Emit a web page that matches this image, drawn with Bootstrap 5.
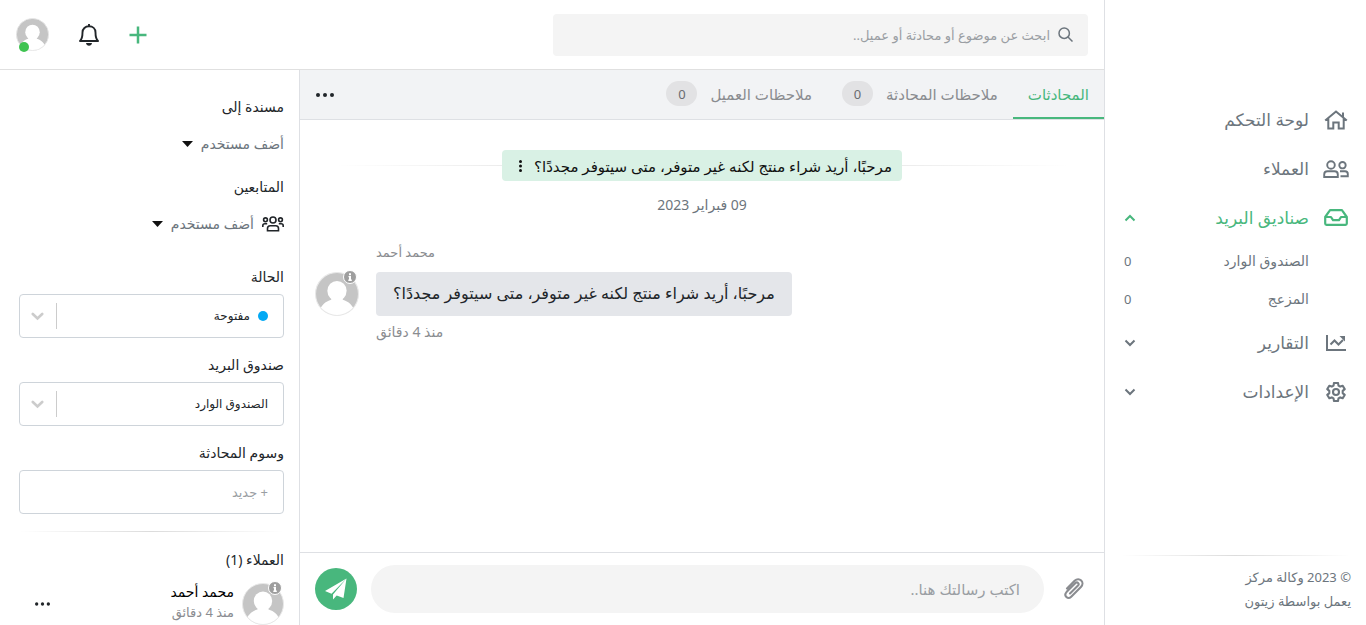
<!DOCTYPE html>
<html lang="ar" dir="rtl">
<head>
<meta charset="utf-8">
<meta name="viewport" content="width=device-width, initial-scale=1">
<title>زيتون</title>
<link rel="stylesheet" href="https://cdn.jsdelivr.net/npm/bootstrap@5.3.0/dist/css/bootstrap.min.css">
<style>
  :root { --brand: #48b77d; --line: #dee0e4; --ink: #212529; --soft: #6c757d; --pale: #8a8c90; }
  body { font-family: "Noto Sans", "DejaVu Sans", sans-serif; font-size: 14px; line-height: 24px; color: var(--ink); background: #fff; }
  svg { display: block; flex: none; }
  button { font-family: inherit; }
  a { color: inherit; text-decoration: none; }
  .plain-btn { border: 0; background: none; padding: 0; color: inherit; }
  .t12 { font-size: 12px; } .t13 { font-size: 13px; } .t14 { font-size: 14px; } .t15 { font-size: 15px; } .t16 { font-size: 16px; } .t17 { font-size: 17px; }
  .soft { color: var(--soft); } .pale { color: var(--pale); } .ink { color: var(--ink); } .brand { color: var(--brand); }

  .side-nav { width: 262px; border-left: 1px solid var(--line); padding-top: 95px; }
  .nav-row { height: 49px; padding: 0 17px 0 19px; gap: 14px; width: 100%; color: var(--soft); }
  .nav-row.current { color: var(--brand); }
  .nav-ico { width: 26px; display: flex; justify-content: center; flex: none; }
  .flip { transform: rotate(180deg); }
  .sub-row { height: 38px; padding: 0 57px 0 19px; color: var(--soft); }
  .fade-line { height: 1px; background: linear-gradient(to right, transparent, #dcdcdc, transparent); }
  .side-foot { padding: 9px 15px 12px; }

  .top-bar { height: 70px; border-bottom: 1px solid #e0e0e0; padding: 0 16px; }
  .search-box { width: 535px; height: 42px; background: #f4f4f4; border-radius: 4px; padding: 0 15px; gap: 8px; color: var(--soft); }
  .bare { border: 0; background: transparent; outline: 0; padding: 0; min-width: 0; color: var(--ink); }
  .bare::placeholder { color: #9a9ea3; opacity: 1; }
  .top-actions { gap: 30px; }
  .face { position: relative; flex: none; }
  .face .dot-on { position: absolute; left: 3px; bottom: -1px; width: 10px; height: 10px; border-radius: 50%; background: #3fc351; }
  .face .info-dot { position: absolute; right: 2px; top: -2px; }

  .tab-bar { height: 50px; background: #f2f3f5; border-bottom: 1px solid var(--line); }
  .tab-item { height: 49px; padding: 0 15px; gap: 13px; color: var(--pale); display: flex; align-items: center; border-bottom: 2px solid transparent; white-space: nowrap; }
  .tab-item.current { color: var(--brand); border-color: var(--brand); }
  .num-pill { width: 31px; height: 25px; border-radius: 13px; background: #e2e2e4; color: #6a6c70; display: flex; align-items: center; justify-content: center; }

  .talk { padding: 30px 35px 0 15px; min-height: 0; }
  .talk-head { margin-left: 20px; }
  .subject { background: #d9f1e5; border-radius: 4px; padding: 0 10px 0 13px; height: 31px; gap: 8px; color: #111; }
  .half-a { height: 1px; background: linear-gradient(to left, transparent, #ececec); }
  .half-b { height: 1px; background: linear-gradient(to right, transparent, #ececec); }
  .day { margin: 12px 0 23px; }
  .talk-row { gap: 17px; }
  .talk-row .face { margin-top: 4px; }
  .bubble { background: #e4e6ea; border-radius: 4px; padding: 9px 17px 11px; margin: 8px 0 4px; }
  .composer { border-top: 1px solid var(--line); padding: 12px 15px; gap: 14px; }
  .pill-input { height: 48px; border-radius: 24px; background: #f4f4f4; padding: 0 24px; }
  .send { width: 42px; height: 42px; border-radius: 50%; background: var(--brand); color: #fff; }

  .info-col { width: 300px; border-right: 1px solid var(--line); padding: 25px 15px 0 19px; }
  .people-pick { margin: 13px 0 19px; gap: 8px; }
  .field-block { margin-bottom: 15px; }
  .field-block label, .field-title { display: block; }
  .fields { margin-top: 29px; }
  .pick { height: 44px; border: 1px solid #ced4da; border-radius: 4px; padding: 0 15px 0 11px; margin-top: 5px; }
  .pick select { appearance: none; background: none; }
  .pick-dot { width: 10px; height: 10px; border-radius: 50%; background: #03a9f4; margin-left: 8px; }
  .pick-cut { width: 1px; height: 26px; background: #ccc; margin: 0 0 0 12px; }
  .list-line { margin-top: 17px; }
  .client-head { margin: 16px 0 10px; }
  .client-text { line-height: 20px; padding-bottom: 4px; }
</style>
<script src="https://cdn.jsdelivr.net/npm/bootstrap@5.3.0/dist/js/bootstrap.bundle.min.js"></script>
</head>
<body>
<svg width="0" height="0" class="position-absolute" aria-hidden="true">
  <symbol id="person" viewBox="0 0 42 42">
    <clipPath id="round"><circle cx="21" cy="21" r="20.500"/></clipPath>
    <circle cx="21" cy="21" r="20.500" fill="#c5c5c5"/>
    <g clip-path="url(#round)" fill="#fff"><ellipse cx="21" cy="18" rx="9.200" ry="9.500"/><path d="M15.500 24h11v2.500C32 28 36.500 32 38 38v6H4v-6c1.500-6 6-10 11.500-11.500z"/></g>
    <circle cx="21" cy="21" r="20.500" fill="none" stroke="#e8e8e8"/>
  </symbol>
  <symbol id="info" viewBox="0 0 14 14"><circle cx="7" cy="7" r="6.500" fill="#9e9e9e" stroke="#fff"/><path d="M6 3.200h2v2H6zM5.500 6H8v3.600h.8V11H5.300V9.600H6V7.300h-.5z" fill="#fff"/></symbol>
  <symbol id="down" viewBox="0 0 12 8"><path d="M1.500 1.500 6 6l4.500-4.500" fill="none" stroke="currentColor" stroke-width="2"/></symbol>
  <symbol id="caret" viewBox="0 0 11 6"><path d="M0 0h11L5.500 6z" fill="#111"/></symbol>
  <symbol id="pick-down" viewBox="0 0 13 9"><path d="m1.800 2 4.700 4.500L11.200 2" fill="none" stroke="#ccc" stroke-width="2.600" stroke-linecap="round"/></symbol>
  <symbol id="dots" viewBox="0 0 18 4"><g fill="currentColor"><circle cx="2" cy="2" r="2"/><circle cx="9" cy="2" r="2"/><circle cx="16" cy="2" r="2"/></g></symbol>
</svg>

<div class="d-flex vh-100 overflow-hidden">
  <aside class="side-nav d-flex flex-column flex-shrink-0">
    <nav class="t17">
      <a href="#" class="nav-row d-flex align-items-center">
        <span class="nav-ico"><svg width="24" height="20" viewBox="0 0 24 20" fill="none" stroke="currentColor" stroke-width="2"><path d="M1.200 10.500 12 1.500l10.800 9M19 7.200V2.500M4.300 8.500v10h5v-6h5.400v6h5v-10"/></svg></span>
        <span>لوحة التحكم</span></a>
      <a href="#" class="nav-row d-flex align-items-center">
        <span class="nav-ico"><svg width="26" height="18" viewBox="0 0 26 18" fill="none" stroke="currentColor" stroke-width="1.900"><circle cx="8" cy="5" r="3.800"/><circle cx="19.500" cy="5.200" r="3.200"/><path d="M1.200 17v-2.500c0-2 1.500-3.200 3.300-3.200h7c1.800 0 3.300 1.200 3.300 3.200V17zM17 11.300h5c1.700 0 2.800 1.200 2.800 2.700v2.200h-7.300"/></svg></span>
        <span>العملاء</span></a>
      <a href="#" class="nav-row current d-flex align-items-center">
        <span class="nav-ico"><svg width="24" height="17" viewBox="0 0 24 17" fill="none" stroke="currentColor" stroke-width="2.200" stroke-linejoin="round"><path d="M1.200 8v6.500c0 .8.500 1.300 1.300 1.300h19c.8 0 1.300-.5 1.300-1.300V8l-4.300-6.200c-.3-.5-.6-.6-1.100-.6H6.600c-.5 0-.8.100-1.100.6zM1.500 8H7l2 3.200h6L17 8h5.500"/></svg></span>
        <span>صناديق البريد</span>
        <svg class="me-auto flip" width="12" height="8"><use href="#down"/></svg></a>
      <a href="#" class="sub-row d-flex align-items-center justify-content-between t14"><span>الصندوق الوارد</span><span class="t13">0</span></a>
      <a href="#" class="sub-row d-flex align-items-center justify-content-between t14"><span>المزعج</span><span class="t13">0</span></a>
      <a href="#" class="nav-row d-flex align-items-center">
        <span class="nav-ico"><svg width="20" height="16" viewBox="0 0 20 16" fill="none" stroke="currentColor" stroke-width="2"><path d="M1 0v15h19"/><path d="m4.500 9.500 4-4 4 4L17 5"/><path d="M13.500 1H19v5.500z" fill="currentColor" stroke="none"/></svg></span>
        <span>التقارير</span>
        <svg class="me-auto" width="12" height="8"><use href="#down"/></svg></a>
      <a href="#" class="nav-row d-flex align-items-center">
        <span class="nav-ico"><svg width="20" height="20" viewBox="0 0 20 20" fill="none" stroke="currentColor" stroke-width="2.100" stroke-linejoin="round"><path d="M8 1h4l.5 2.600 1.700 1 2.500-.9 2 3.400-2 1.800v2.200l2 1.800-2 3.400-2.500-.9-1.700 1L12 19H8l-.5-2.600-1.700-1-2.500.9-2-3.400 2-1.800V8.900l-2-1.800 2-3.400 2.500.9 1.700-1z"/><circle cx="10" cy="10" r="3"/></svg></span>
        <span>الإعدادات</span>
        <svg class="me-auto" width="12" height="8"><use href="#down"/></svg></a>
    </nav>
    <footer class="mt-auto soft t13">
      <div class="fade-line mx-3"></div>
      <div class="side-foot">© 2023 وكالة مركز<br>يعمل بواسطة <a href="#">زيتون</a></div>
    </footer>
  </aside>

  <div class="d-flex flex-column flex-grow-1 overflow-hidden">
    <header class="top-bar d-flex align-items-center justify-content-between flex-shrink-0">
      <label class="search-box d-flex align-items-center">
        <svg width="15" height="15" viewBox="0 0 15 15" fill="none" stroke="currentColor" stroke-width="1.500"><circle cx="6.200" cy="6.200" r="5.200"/><path d="m10 10 4.500 4.500"/></svg>
        <input class="bare flex-grow-1 t13" type="search" aria-label="بحث" placeholder="ابحث عن موضوع أو محادثة أو عميل..">
      </label>
      <div class="top-actions d-flex align-items-center">
        <button type="button" class="plain-btn brand" aria-label="جديد"><svg width="18" height="18" viewBox="0 0 18 18" stroke="currentColor" stroke-width="2.500"><path d="M9 .5v17M.5 9h17"/></svg></button>
        <button type="button" class="plain-btn" aria-label="الإشعارات"><svg width="20" height="22" viewBox="0 0 20 22" fill="none" stroke="currentColor" stroke-width="1.900"><path d="M10 0v2M1 17c1.800-1.700 2.500-4 2.500-8.500C3.500 4.600 6.300 2.300 10 2.300s6.500 2.300 6.500 6.200c0 4.500.7 6.800 2.500 8.500z" stroke-linejoin="round"/><path d="M7 19h6c-.3 1.800-1.400 2.700-3 2.700S7.300 20.800 7 19z" fill="currentColor" stroke="none"/></svg></button>
        <div class="face"><svg width="33" height="33"><use href="#person"/></svg><span class="dot-on"></span></div>
      </div>
    </header>

    <div class="d-flex flex-grow-1 overflow-hidden">
      <main class="d-flex flex-column flex-grow-1 overflow-hidden">
        <div class="tab-bar d-flex align-items-center flex-shrink-0">
          <a href="#" class="tab-item current t15">المحادثات</a>
          <a href="#" class="tab-item t15">ملاحظات المحادثة <span class="num-pill t13">0</span></a>
          <a href="#" class="tab-item t15">ملاحظات العميل <span class="num-pill t13">0</span></a>
          <button type="button" class="plain-btn px-3 me-auto" aria-label="خيارات"><svg width="18" height="4"><use href="#dots"/></svg></button>
        </div>
        <section class="talk flex-grow-1">
          <div class="talk-head">
            <div class="d-flex align-items-center">
              <div class="half-a flex-fill"></div>
              <div class="subject d-flex align-items-center text-nowrap">
                <span class="t15">مرحبًا، أريد شراء منتج لكنه غير متوفر، متى سيتوفر مجددًا؟</span>
                <button type="button" class="plain-btn px-1" aria-label="خيارات الموضوع"><svg width="3" height="12" viewBox="0 0 3 12" fill="currentColor"><circle cx="1.500" cy="1.500" r="1.500"/><circle cx="1.500" cy="6" r="1.500"/><circle cx="1.500" cy="10.500" r="1.500"/></svg></button>
              </div>
              <div class="half-b flex-fill"></div>
            </div>
            <div class="day text-center soft t14">09 فبراير 2023</div>
          </div>
          <div class="talk-row d-flex flex-row-reverse align-items-center">
            <div class="face"><svg width="44" height="44"><use href="#person"/></svg><svg class="info-dot" width="14" height="14"><use href="#info"/></svg></div>
            <div class="d-flex flex-column align-items-end pale">
              <div class="t13">محمد أحمد</div>
              <div class="bubble t16 ink">مرحبًا، أريد شراء منتج لكنه غير متوفر، متى سيتوفر مجددًا؟</div>
              <div class="t14">منذ 4 دقائق</div>
            </div>
          </div>
        </section>
        <form class="composer d-flex align-items-center flex-shrink-0">
          <button type="button" class="plain-btn px-1 pale" aria-label="إرفاق ملف"><svg width="23" height="22" viewBox="0 0 23 22" fill="none" stroke="currentColor" stroke-width="2.100" stroke-linecap="round"><path d="m8 15.500 8-8c1.700-1.800-.7-4.200-2.500-2.400l-9 9c-3.200 3.400 1.300 7.900 4.700 4.600l9.700-9.700c4.500-4.700-1.600-10.700-6.300-6.200L5 10.500"/></svg></button>
          <input class="bare pill-input flex-grow-1 t15" type="text" aria-label="رسالة" placeholder="اكتب رسالتك هنا..">
          <button type="button" class="plain-btn send d-flex align-items-center justify-content-center" aria-label="إرسال"><svg width="22" height="22" viewBox="0 0 22 22" fill="currentColor"><path d="M21.500.5 0 13l6.500 2.700zM21.500.5 18.500 20l-6.800-2.500L8 21.500v-5z"/></svg></button>
        </form>
      </main>

      <aside class="info-col flex-shrink-0 overflow-hidden">
        <div class="field-title">مسندة إلى</div>
        <button type="button" class="plain-btn people-pick soft d-flex align-items-center">أضف مستخدم <svg width="11" height="6"><use href="#caret"/></svg></button>
        <div class="field-title">المتابعين</div>
        <button type="button" class="plain-btn people-pick soft d-flex align-items-center">
          <svg class="ink" width="22" height="16" viewBox="0 0 22 16" fill="none" stroke="currentColor" stroke-width="1.600"><circle cx="11" cy="4" r="3"/><circle cx="3.500" cy="3.800" r="1.900"/><circle cx="18.500" cy="3.800" r="1.900"/><path d="M5.500 14.800v-2.300c0-1.600 1.100-2.700 2.700-2.700h5.600c1.600 0 2.700 1.100 2.700 2.700v2.300zM.8 11V9.800c0-1.200.8-2 2-2h2.400M21.200 11V9.800c0-1.200-.8-2-2-2h-2.400"/></svg>
          أضف مستخدم <svg width="11" height="6"><use href="#caret"/></svg></button>

        <div class="fields">
          <div class="field-block">
            <label for="state">الحالة</label>
            <div class="pick d-flex align-items-center">
              <span class="pick-dot"></span>
              <select id="state" class="bare flex-grow-1 t12"><option>مفتوحة</option></select>
              <span class="pick-cut"></span><svg width="13" height="9" aria-hidden="true"><use href="#pick-down"/></svg>
            </div>
          </div>
          <div class="field-block">
            <label for="box">صندوق البريد</label>
            <div class="pick d-flex align-items-center">
              <select id="box" class="bare flex-grow-1 t12"><option>الصندوق الوارد</option></select>
              <span class="pick-cut"></span><svg width="13" height="9" aria-hidden="true"><use href="#pick-down"/></svg>
            </div>
          </div>
          <div>
            <label class="field-title" for="tags">وسوم المحادثة</label>
            <div class="pick d-flex align-items-center"><input id="tags" class="bare flex-grow-1 t13" type="text" placeholder="+ جديد"></div>
          </div>
        </div>
        <div class="fade-line list-line"></div>
        <div class="client-head">العملاء (1)</div>
        <div class="d-flex align-items-center">
          <div class="face"><svg width="42" height="42"><use href="#person"/></svg><svg class="info-dot" width="14" height="14"><use href="#info"/></svg></div>
          <div class="client-text flex-grow-1 px-2"><div class="text-black">محمد أحمد</div><div class="t13 pale">منذ 4 دقائق</div></div>
          <button type="button" class="plain-btn px-3" aria-label="خيارات العميل"><svg width="15" height="4"><use href="#dots"/></svg></button>
        </div>
      </aside>
    </div>
  </div>
</div>
</body>
</html>
